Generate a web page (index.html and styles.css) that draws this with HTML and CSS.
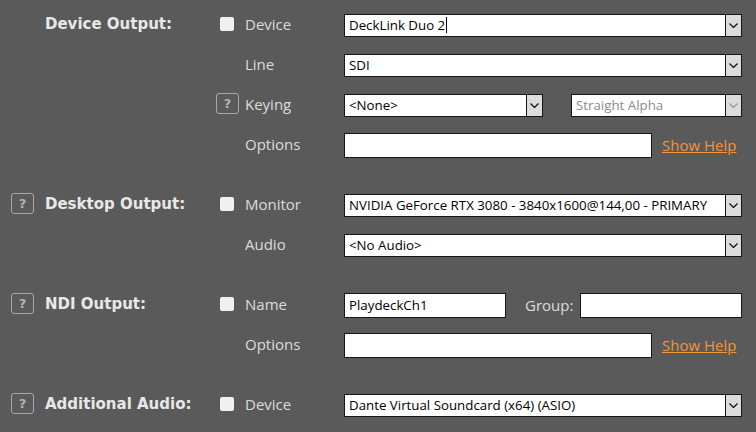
FILE: index.html
```html
<!DOCTYPE html>
<html>
<head>
<meta charset="utf-8">
<link rel="stylesheet" href="styles.css">
</head>
<body>
<div class="page">
  <div class="section">
    <div class="row">
      <div class="help-cell"></div>
      <div class="title">Device Output:</div>
      <div class="check-cell"><span class="check"></span></div>
      <div class="label">Device</div>
      <div class="ctrl">
        <div class="select full"><span class="value">DeckLink Duo 2<span class="caret"></span></span><span class="arrow"><svg width="9" height="5" viewBox="0 0 9 5"><polyline points="0.5,0.5 4.5,4.5 8.5,0.5" fill="none" stroke="#111" stroke-width="1.3"/></svg></span></div>
      </div>
    </div>
    <div class="row">
      <div class="help-cell"></div>
      <div class="title"></div>
      <div class="check-cell"></div>
      <div class="label">Line</div>
      <div class="ctrl">
        <div class="select full"><span class="value">SDI</span><span class="arrow"><svg width="9" height="5" viewBox="0 0 9 5"><polyline points="0.5,0.5 4.5,4.5 8.5,0.5" fill="none" stroke="#111" stroke-width="1.3"/></svg></span></div>
      </div>
    </div>
    <div class="row">
      <div class="help-cell"></div>
      <div class="title"></div>
      <div class="check-cell"><span class="help shifted">?</span></div>
      <div class="label">Keying</div>
      <div class="ctrl">
        <div class="select key"><span class="value">&lt;None&gt;</span><span class="arrow"><svg width="9" height="5" viewBox="0 0 9 5"><polyline points="0.5,0.5 4.5,4.5 8.5,0.5" fill="none" stroke="#111" stroke-width="1.3"/></svg></span></div>
        <div class="select alpha disabled"><span class="value">Straight Alpha</span><span class="arrow"><svg width="9" height="5" viewBox="0 0 9 5"><polyline points="0.5,0.5 4.5,4.5 8.5,0.5" fill="none" stroke="#9a9a9a" stroke-width="1.3"/></svg></span></div>
      </div>
    </div>
    <div class="row">
      <div class="help-cell"></div>
      <div class="title"></div>
      <div class="check-cell"></div>
      <div class="label">Options</div>
      <div class="ctrl">
        <div class="input opts"></div>
        <a class="link">Show Help</a>
      </div>
    </div>
  </div>

  <div class="section">
    <div class="row">
      <div class="help-cell"><span class="help">?</span></div>
      <div class="title">Desktop Output:</div>
      <div class="check-cell"><span class="check"></span></div>
      <div class="label">Monitor</div>
      <div class="ctrl">
        <div class="select full"><span class="value">NVIDIA GeForce RTX 3080 - 3840x1600@144,00 - PRIMARY</span><span class="arrow"><svg width="9" height="5" viewBox="0 0 9 5"><polyline points="0.5,0.5 4.5,4.5 8.5,0.5" fill="none" stroke="#111" stroke-width="1.3"/></svg></span></div>
      </div>
    </div>
    <div class="row">
      <div class="help-cell"></div>
      <div class="title"></div>
      <div class="check-cell"></div>
      <div class="label">Audio</div>
      <div class="ctrl">
        <div class="select full"><span class="value">&lt;No Audio&gt;</span><span class="arrow"><svg width="9" height="5" viewBox="0 0 9 5"><polyline points="0.5,0.5 4.5,4.5 8.5,0.5" fill="none" stroke="#111" stroke-width="1.3"/></svg></span></div>
      </div>
    </div>
  </div>

  <div class="section">
    <div class="row">
      <div class="help-cell"><span class="help">?</span></div>
      <div class="title">NDI Output:</div>
      <div class="check-cell"><span class="check"></span></div>
      <div class="label">Name</div>
      <div class="ctrl">
        <div class="input name"><span class="value">PlaydeckCh1</span></div>
        <span class="group-label">Group:</span>
        <div class="input group"></div>
      </div>
    </div>
    <div class="row">
      <div class="help-cell"></div>
      <div class="title"></div>
      <div class="check-cell"></div>
      <div class="label">Options</div>
      <div class="ctrl">
        <div class="input opts"></div>
        <a class="link">Show Help</a>
      </div>
    </div>
  </div>

  <div class="section">
    <div class="row">
      <div class="help-cell"><span class="help">?</span></div>
      <div class="title">Additional Audio:</div>
      <div class="check-cell"><span class="check"></span></div>
      <div class="label">Device</div>
      <div class="ctrl">
        <div class="select full"><span class="value">Dante Virtual Soundcard (x64) (ASIO)</span><span class="arrow"><svg width="9" height="5" viewBox="0 0 9 5"><polyline points="0.5,0.5 4.5,4.5 8.5,0.5" fill="none" stroke="#111" stroke-width="1.3"/></svg></span></div>
      </div>
    </div>
  </div>
</div>
</body>
</html>
```

FILE: styles.css
```css
html, body {
  margin: 0;
  padding: 0;
  background: #5a5a5a;
}
body {
  font-family: "Open Sans", "DejaVu Sans", sans-serif;
  color: #dedede;
  width: 756px;
  height: 432px;
  overflow: hidden;
}
.page {
  padding: 5px 0 0 11px;
}
.section {
  margin-bottom: 20px;
}
.row {
  display: grid;
  grid-template-columns: 34px 175px 25px 99px 398px;
  height: 40px;
  align-items: center;
}
.title {
  font-family: "DejaVu Sans", sans-serif;
  font-weight: bold;
  font-size: 15px;
  color: #e8e8e8;
  margin-top: -3px;
}
.label {
  font-size: 15px;
  color: #dcdcdc;
  margin-top: -2px;
}
.check-cell, .help-cell {
  display: flex;
  align-items: center;
}
.check {
  width: 14px;
  height: 14px;
  background: #f0f0f0;
  border-radius: 2px;
  margin-top: -3px;
}
.help {
  box-sizing: border-box;
  width: 23px;
  height: 21px;
  border: 1px solid #a8a8a8;
  border-radius: 3px;
  color: #b4b4b4;
  font-family: "DejaVu Sans", sans-serif;
  font-weight: bold;
  font-size: 13px;
  display: flex;
  align-items: center;
  justify-content: center;
  margin-top: -3px;
}
.help.shifted {
  margin-left: -4px;
}
.ctrl {
  display: flex;
  align-items: center;
}
.select, .input {
  box-sizing: border-box;
  background: #fff;
  border: 1px solid #161616;
  display: flex;
  align-items: center;
  font-size: 13.3px;
  color: #000;
}
.select {
  height: 23px;
}
.input {
  height: 25px;
}
.select .value, .input .value {
  flex: 1;
  padding-left: 4px;
  white-space: nowrap;
  overflow: hidden;
  display: flex;
  align-items: center;
}
.arrow {
  box-sizing: border-box;
  width: 16px;
  height: 100%;
  background: #dcdcdc;
  border-left: 1px solid #161616;
  display: flex;
  align-items: center;
  justify-content: center;
}
.caret {
  display: inline-block;
  width: 1px;
  height: 16px;
  background: #000;
  margin-left: 1px;
}
.full {
  width: 398px;
}
.key {
  width: 199px;
}
.alpha {
  width: 171px;
  margin-left: 28px;
}
.disabled .value {
  color: #8c8c8c;
}
.opts {
  width: 308px;
}
.link {
  margin-left: 10px;
  font-size: 15px;
  color: #f0953a;
  text-decoration: underline;
  margin-top: -1px;
}
.name {
  width: 162px;
}
.group-label {
  font-size: 15px;
  color: #dcdcdc;
  margin-left: 19px;
  width: 55px;
}
.group {
  width: 162px;
}
```
